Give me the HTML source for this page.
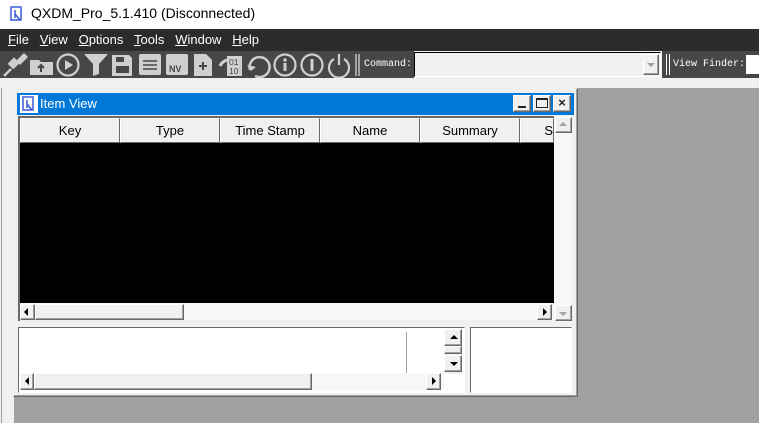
<!DOCTYPE html>
<html><head><style>
*{margin:0;padding:0;box-sizing:border-box}
body{width:759px;height:423px;overflow:hidden;background:#f0f0f0;font-family:"Liberation Sans",sans-serif;position:relative}
.a{position:absolute}
.btn{background:#f0f0f0;border:1px solid;border-color:#fff #696969 #696969 #fff;box-shadow:inset -1px -1px 0 #a0a0a0}
.hd{position:absolute;top:118px;height:25px;background:#f0f0f0;border:1px solid;border-color:#fff #696969 #696969 #fff;font-size:13px;text-align:center;line-height:23px;color:#000}
.mono{font-family:"Liberation Mono",monospace;font-size:10px;color:#fff}
</style></head><body>
<div class="a" style="left:0;top:0;width:759px;height:29px;background:#fff"></div>
<svg class="a" style="left:9px;top:6px" width="16" height="16" viewBox="0 0 16 16"><rect x="2" y="1" width="10" height="13" fill="none" stroke="#3b5bd6" stroke-width="1.5"/><path d="M6 4v8M6 8l5 6" stroke="#3b5bd6" stroke-width="1.5" fill="none"/></svg>
<div class="a" style="left:31px;top:5px;font-size:14px;color:#000">QXDM_Pro_5.1.410 (Disconnected)</div>
<div class="a" style="left:0;top:29px;width:759px;height:22px;background:#2b2b2e"></div>
<div class="a" style="left:8px;top:32px;font-size:13px;color:#fff;word-spacing:0"><u>F</u>ile&nbsp;&nbsp; <u>V</u>iew&nbsp;&nbsp; <u>O</u>ptions&nbsp;&nbsp; <u>T</u>ools&nbsp;&nbsp; <u>W</u>indow&nbsp;&nbsp; <u>H</u>elp</div>
<div class="a" style="left:0;top:51px;width:362px;height:27px;background:#474747"></div>
<svg class="a" style="left:0;top:51px" width="362" height="27" viewBox="0 0 362 27" fill="#cfcfcf" stroke="#cfcfcf">
<path d="M4 25l7-7" stroke-width="2.5"/><rect x="10" y="8" width="8" height="9" transform="rotate(45 14 12)" stroke="none"/><path d="M16 10l8-8 4 4-8 8z" stroke="none"/>
<path d="M30 9h9l2 2h12v13H30z" stroke="none"/><path d="M41 21v-6M38 17l3-3 3 3" stroke="#474747" stroke-width="2" fill="none"/>
<circle cx="68" cy="14" r="10.5" fill="none" stroke-width="2.2"/><path d="M65 9v10l8-5z" stroke="none"/>
<path d="M84 3h24l-9 10v10l-6 2V13z" stroke="none"/>
<path d="M112 4h17l3 3v18h-20z" stroke="none"/><rect x="116" y="6" width="8" height="5" fill="#474747" stroke="none"/><rect x="116" y="15" width="13" height="7" fill="#474747" stroke="none"/>
<rect x="139" y="3" width="22" height="21" rx="2" stroke="none"/><path d="M143 10h14M143 14h14M143 18h14" stroke="#474747" stroke-width="1.6"/>
<rect x="166" y="3" width="22" height="21" rx="2" stroke="none"/><text x="169" y="21" font-size="9" font-weight="bold" fill="#474747" stroke="none" font-family="Liberation Sans">NV</text>
<path d="M194 3h12l6 6v16h-18z" stroke="none"/><path d="M203 11v8M199 15h8" stroke="#474747" stroke-width="2"/>
<path d="M220 15c2-4 5-6 9-6" fill="none" stroke-width="3"/><rect x="227" y="5" width="15" height="20" stroke="none"/><text x="229" y="14" font-size="8.5" fill="#474747" stroke="none" font-family="Liberation Sans">01</text><text x="229" y="23" font-size="8.5" fill="#474747" stroke="none" font-family="Liberation Sans">10</text>
<path d="M250 19a10 10 0 1 1 5 6" fill="none" stroke-width="2.5"/><path d="M247 14l4 6 5-4z" stroke="none"/>
<circle cx="285" cy="14" r="10.5" fill="none" stroke-width="2.2"/><circle cx="285" cy="9" r="1.7" stroke="none"/><rect x="283.5" y="12" width="3" height="8" stroke="none"/>
<circle cx="312" cy="14" r="10.5" fill="none" stroke-width="2.2"/><rect x="310.5" y="8" width="3" height="12" stroke="none"/>
<path d="M334 8a10 10 0 1 0 10 0" fill="none" stroke-width="2.2"/><path d="M339 3v11" stroke-width="2.2"/>
<path d="M356 3v22M359 3v22" stroke="#fff" stroke-width="1"/>
</svg>
<div class="a mono" style="left:362px;top:51px;width:52px;height:27px;background:#474747;line-height:27px;padding-left:2px">Command:</div>
<div class="a" style="left:414px;top:52px;width:247px;height:25px;background:#f0f0f0;border:1px solid #000;border-color:#000 #fff #fff #000"></div>
<div class="a btn" style="left:643px;top:54px;width:16px;height:21px"></div>
<div class="a" style="left:647px;top:63px;border:4px solid transparent;border-top:4px solid #a0a0a0"></div>
<div class="a" style="left:662px;top:51px;width:97px;height:27px;background:#474747"></div>
<div class="a" style="left:666px;top:54px;width:1px;height:21px;background:#fff"></div>
<div class="a" style="left:669px;top:54px;width:1px;height:21px;background:#fff"></div>
<div class="a mono" style="left:673px;top:51px;line-height:27px">View Finder:</div>
<div class="a" style="left:746px;top:55px;width:13px;height:19px;background:#fff"></div>
<div class="a" style="left:14px;top:88px;width:745px;height:335px;background:#a0a0a0"></div>
<div class="a" style="left:1px;top:88px;width:1px;height:335px;background:#a0a0a0"></div>
<div class="a" style="left:13px;top:88px;width:565px;height:309px;background:#f0f0f0;border:1px solid;border-color:#f0f0f0 #696969 #696969 #f0f0f0;box-shadow:inset -1px -1px 0 #a0a0a0"></div>
<div class="a" style="left:17px;top:93px;width:557px;height:22px;background:#0078d7"></div>
<svg class="a" style="left:20px;top:95px" width="18" height="18" viewBox="0 0 18 18"><rect width="18" height="18" fill="#fff"/><rect x="3" y="2" width="10" height="13" fill="none" stroke="#3b5bd6" stroke-width="1.5"/><path d="M7 5v8M7 9l5 6" stroke="#3b5bd6" stroke-width="1.5"/></svg>
<div class="a" style="left:40px;top:96px;font-size:13px;color:#fff">Item View</div>
<div class="a btn" style="left:513px;top:95px;width:18px;height:17px"></div><div class="a" style="left:518px;top:106px;width:8px;height:2px;background:#222"></div>
<div class="a btn" style="left:533px;top:95px;width:18px;height:17px"></div><div class="a" style="left:536px;top:98px;width:12px;height:10px;border:1px solid #222;border-top-width:2px"></div>
<div class="a btn" style="left:553px;top:95px;width:18px;height:17px;font-size:13px;font-weight:bold;text-align:center;line-height:14px;color:#222">×</div>
<div class="a" style="left:18px;top:116px;width:536px;height:2px;background:#696969"></div>
<div class="hd" style="left:20px;width:100px">Key</div>
<div class="hd" style="left:120px;width:100px">Type</div>
<div class="hd" style="left:220px;width:100px">Time Stamp</div>
<div class="hd" style="left:320px;width:100px">Name</div>
<div class="hd" style="left:420px;width:100px">Summary</div>
<div class="hd" style="left:520px;width:34px;text-align:right;overflow:hidden">S</div>
<div class="a" style="left:18px;top:116px;width:2px;height:205px;background:#696969"></div>
<div class="a" style="left:20px;top:143px;width:534px;height:160px;background:#000"></div>
<div class="a" style="left:554px;top:116px;width:18px;height:206px;background:#f7f7f7"></div>
<div class="a btn" style="left:555px;top:117px;width:17px;height:16px"></div><div class="a" style="left:559px;top:122px;border:4px solid transparent;border-bottom:4px solid #a0a0a0;border-top:0"></div>
<div class="a btn" style="left:555px;top:305px;width:17px;height:16px"></div><div class="a" style="left:559px;top:312px;border:4px solid transparent;border-top:4px solid #a0a0a0;border-bottom:0"></div>
<div class="a" style="left:20px;top:303px;width:534px;height:17px;background:#f7f7f7"></div>
<div class="a btn" style="left:20px;top:304px;width:15px;height:16px"></div><div class="a" style="left:24px;top:308px;border:4px solid transparent;border-right:4px solid #000;border-left:0"></div>
<div class="a btn" style="left:35px;top:304px;width:149px;height:16px"></div>
<div class="a btn" style="left:537px;top:304px;width:15px;height:16px"></div><div class="a" style="left:543px;top:308px;border:4px solid transparent;border-left:4px solid #000;border-right:0"></div>
<div class="a" style="left:18px;top:327px;width:447px;height:66px;background:#fff;border:1px solid;border-color:#696969 #fff #fff #696969"></div>
<div class="a" style="left:406px;top:332px;width:1px;height:42px;background:#a0a0a0"></div>
<div class="a" style="left:444px;top:329px;width:18px;height:45px;background:#f0f0f0"></div>
<div class="a btn" style="left:444px;top:329px;width:18px;height:17px"></div><div class="a" style="left:450px;top:335px;border:4px solid transparent;border-bottom:4px solid #000;border-top:0"></div>
<div class="a btn" style="left:444px;top:346px;width:18px;height:8px"></div>
<div class="a btn" style="left:444px;top:355px;width:18px;height:17px"></div><div class="a" style="left:450px;top:362px;border:4px solid transparent;border-top:4px solid #000;border-bottom:0"></div>
<div class="a" style="left:20px;top:373px;width:424px;height:17px;background:#f7f7f7"></div>
<div class="a btn" style="left:20px;top:373px;width:14px;height:17px"></div><div class="a" style="left:25px;top:377px;border:4px solid transparent;border-right:4px solid #000;border-left:0"></div>
<div class="a btn" style="left:34px;top:373px;width:278px;height:17px"></div>
<div class="a btn" style="left:426px;top:373px;width:15px;height:17px"></div><div class="a" style="left:432px;top:377px;border:4px solid transparent;border-left:4px solid #000;border-right:0"></div>
<div class="a" style="left:470px;top:327px;width:102px;height:66px;background:#fff;border:1px solid;border-color:#696969 #fff #fff #696969"></div>
</body></html>
